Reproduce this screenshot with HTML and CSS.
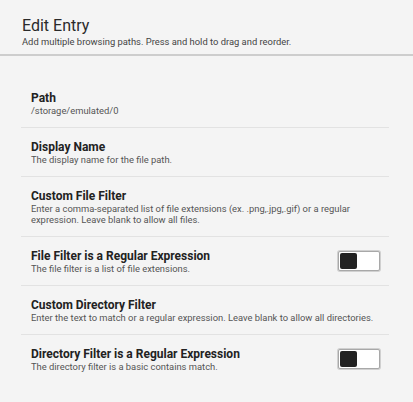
FILE: index.html
```html
<!DOCTYPE html>
<html>
<head>
    <link rel="stylesheet" href="styles.css">
</head>
<body>
    <div class="header">
        <h1>Edit Entry</h1>
        <p>Add multiple browsing paths. Press and hold to drag and reorder.</p>
    </div>
    <div class="settings">
        <div class="item">
            <div class="text">
                <h2>Path</h2>
                <p>/storage/emulated/0</p>
            </div>
        </div>
        <div class="item">
            <div class="text">
                <h2>Display Name</h2>
                <p>The display name for the file path.</p>
            </div>
        </div>
        <div class="item">
            <div class="text">
                <h2>Custom File Filter</h2>
                <p>Enter a comma-separated list of file extensions (ex. .png,.jpg,.gif) or a regular expression. Leave blank to allow all files.</p>
            </div>
        </div>
        <div class="item">
            <div class="text">
                <h2>File Filter is a Regular Expression</h2>
                <p>The file filter is a list of file extensions.</p>
            </div>
            <div class="toggle"><div class="knob"></div></div>
        </div>
        <div class="item">
            <div class="text">
                <h2>Custom Directory Filter</h2>
                <p>Enter the text to match or a regular expression. Leave blank to allow all directories.</p>
            </div>
        </div>
        <div class="item">
            <div class="text">
                <h2>Directory Filter is a Regular Expression</h2>
                <p>The directory filter is a basic contains match.</p>
            </div>
            <div class="toggle"><div class="knob"></div></div>
        </div>
    </div>
</body>
</html>
```
FILE: styles.css
```css
body {
    margin: 0;
    background-color: #f4f4f4;
    font-family: Roboto, "Liberation Sans", sans-serif;
    color: #222;
}
.header {
    padding: 16px 22px 7px 22px;
    border-bottom: 2px solid #cdcdcd;
}
.header h1 {
    margin: 0;
    font-size: 16px;
    line-height: 19px;
    font-weight: 400;
    color: #2a2a2a;
}
.header p {
    margin: 1px 0 0 0;
    font-size: 9.4px;
    line-height: 11px;
    color: #444;
}
.settings {
    margin: 23px 24px 0 21px;
}
.item {
    display: flex;
    align-items: center;
    padding: 11px 9px 10.5px 10px;
    border-bottom: 1px solid #e2e2e2;
}
.item:last-child {
    border-bottom: none;
}
.text {
    flex: 1;
}
.text h2 {
    margin: 0;
    font-size: 12px;
    line-height: 16px;
    font-weight: 700;
    color: #222;
}
.text p {
    margin: 0;
    font-size: 9.4px;
    line-height: 10.5px;
    color: #555;
}
.toggle {
    width: 38px;
    height: 16px;
    padding: 1px;
    border: 1px solid #a8a8a8;
    box-shadow: 0 0 0 1px #d0d0d0;
    border-radius: 2px;
    background-color: #fff;
    margin-left: 10px;
}
.knob {
    width: 17px;
    height: 16px;
    background-color: #222;
    border-radius: 2px;
}
```
